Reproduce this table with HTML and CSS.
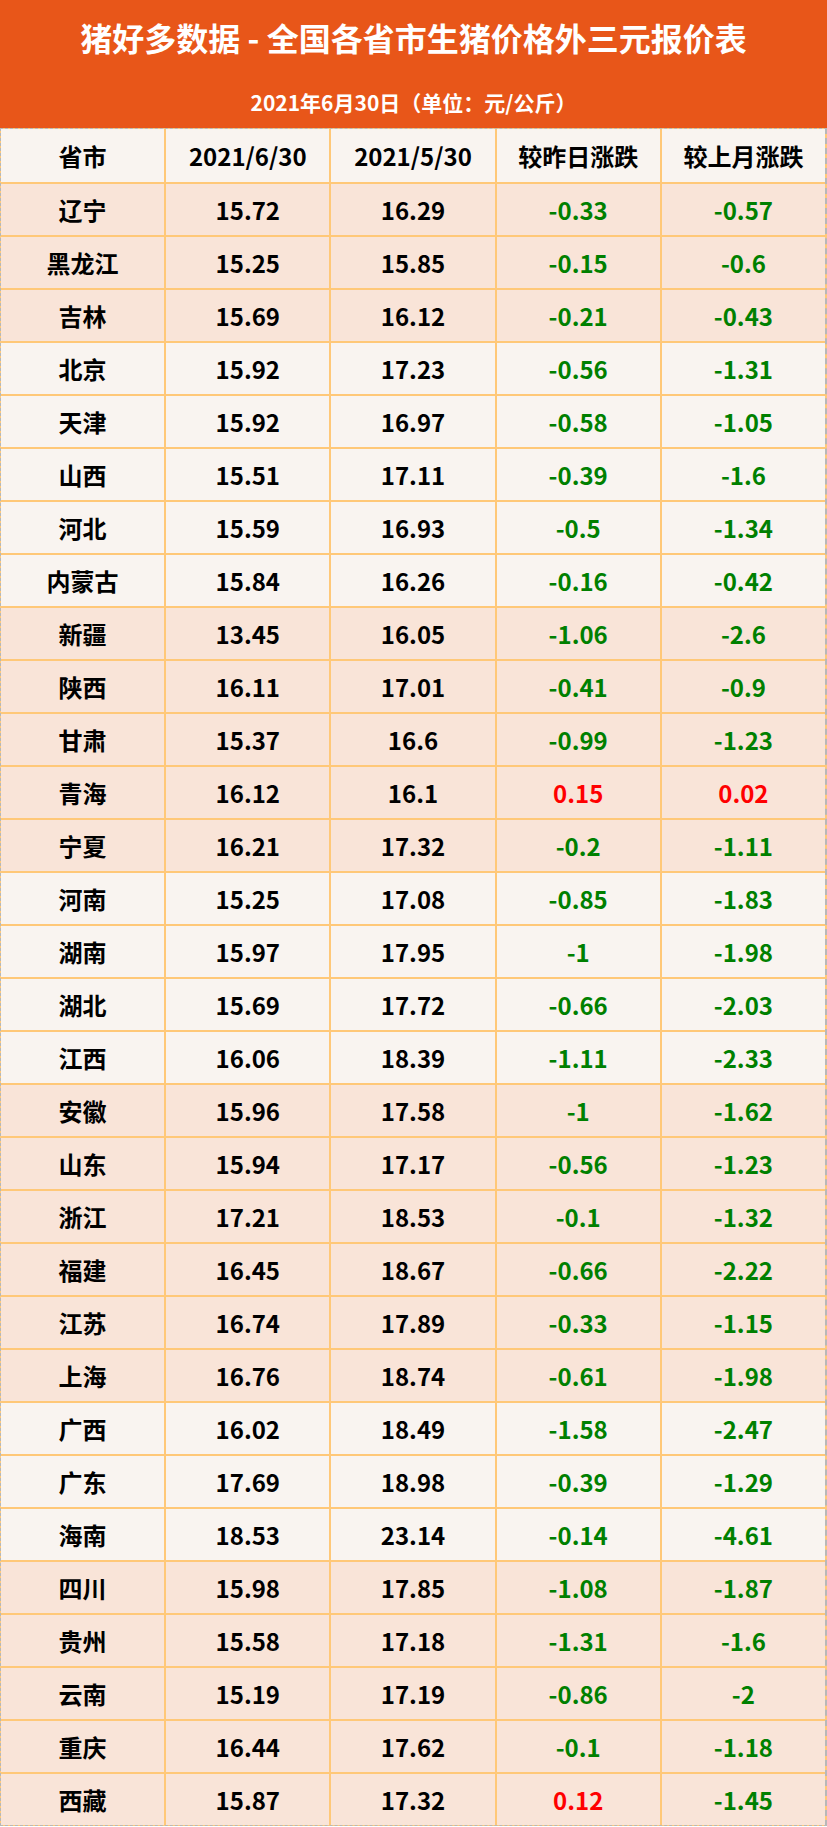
FILE: index.html
```html
<!DOCTYPE html>
<html lang="zh-CN">
<head>
<meta charset="utf-8">
<title>猪好多数据 - 全国各省市生猪价格外三元报价表</title>
<link rel="stylesheet" href="styles.css">
</head>
<body>
<div class="sheet">
  <header class="banner">
    <h1 class="title">猪好多数据 - 全国各省市生猪价格外三元报价表</h1>
    <p class="subtitle">2021年6月30日（单位：元/公斤）</p>
  </header>
  <div class="table">
    <div class="row head w"><div>省市</div><div>2021/6/30</div><div>2021/5/30</div><div>较昨日涨跌</div><div>较上月涨跌</div></div>
    <div class="row p"><div>辽宁</div><div>15.72</div><div>16.29</div><div class="dn">-0.33</div><div class="dn">-0.57</div></div>
    <div class="row p"><div>黑龙江</div><div>15.25</div><div>15.85</div><div class="dn">-0.15</div><div class="dn">-0.6</div></div>
    <div class="row p"><div>吉林</div><div>15.69</div><div>16.12</div><div class="dn">-0.21</div><div class="dn">-0.43</div></div>
    <div class="row w"><div>北京</div><div>15.92</div><div>17.23</div><div class="dn">-0.56</div><div class="dn">-1.31</div></div>
    <div class="row w"><div>天津</div><div>15.92</div><div>16.97</div><div class="dn">-0.58</div><div class="dn">-1.05</div></div>
    <div class="row w"><div>山西</div><div>15.51</div><div>17.11</div><div class="dn">-0.39</div><div class="dn">-1.6</div></div>
    <div class="row w"><div>河北</div><div>15.59</div><div>16.93</div><div class="dn">-0.5</div><div class="dn">-1.34</div></div>
    <div class="row w"><div>内蒙古</div><div>15.84</div><div>16.26</div><div class="dn">-0.16</div><div class="dn">-0.42</div></div>
    <div class="row p"><div>新疆</div><div>13.45</div><div>16.05</div><div class="dn">-1.06</div><div class="dn">-2.6</div></div>
    <div class="row p"><div>陕西</div><div>16.11</div><div>17.01</div><div class="dn">-0.41</div><div class="dn">-0.9</div></div>
    <div class="row p"><div>甘肃</div><div>15.37</div><div>16.6</div><div class="dn">-0.99</div><div class="dn">-1.23</div></div>
    <div class="row p"><div>青海</div><div>16.12</div><div>16.1</div><div class="up">0.15</div><div class="up">0.02</div></div>
    <div class="row p"><div>宁夏</div><div>16.21</div><div>17.32</div><div class="dn">-0.2</div><div class="dn">-1.11</div></div>
    <div class="row w"><div>河南</div><div>15.25</div><div>17.08</div><div class="dn">-0.85</div><div class="dn">-1.83</div></div>
    <div class="row w"><div>湖南</div><div>15.97</div><div>17.95</div><div class="dn">-1</div><div class="dn">-1.98</div></div>
    <div class="row w"><div>湖北</div><div>15.69</div><div>17.72</div><div class="dn">-0.66</div><div class="dn">-2.03</div></div>
    <div class="row w"><div>江西</div><div>16.06</div><div>18.39</div><div class="dn">-1.11</div><div class="dn">-2.33</div></div>
    <div class="row p"><div>安徽</div><div>15.96</div><div>17.58</div><div class="dn">-1</div><div class="dn">-1.62</div></div>
    <div class="row p"><div>山东</div><div>15.94</div><div>17.17</div><div class="dn">-0.56</div><div class="dn">-1.23</div></div>
    <div class="row p"><div>浙江</div><div>17.21</div><div>18.53</div><div class="dn">-0.1</div><div class="dn">-1.32</div></div>
    <div class="row p"><div>福建</div><div>16.45</div><div>18.67</div><div class="dn">-0.66</div><div class="dn">-2.22</div></div>
    <div class="row p"><div>江苏</div><div>16.74</div><div>17.89</div><div class="dn">-0.33</div><div class="dn">-1.15</div></div>
    <div class="row p"><div>上海</div><div>16.76</div><div>18.74</div><div class="dn">-0.61</div><div class="dn">-1.98</div></div>
    <div class="row w"><div>广西</div><div>16.02</div><div>18.49</div><div class="dn">-1.58</div><div class="dn">-2.47</div></div>
    <div class="row w"><div>广东</div><div>17.69</div><div>18.98</div><div class="dn">-0.39</div><div class="dn">-1.29</div></div>
    <div class="row w"><div>海南</div><div>18.53</div><div>23.14</div><div class="dn">-0.14</div><div class="dn">-4.61</div></div>
    <div class="row p"><div>四川</div><div>15.98</div><div>17.85</div><div class="dn">-1.08</div><div class="dn">-1.87</div></div>
    <div class="row p"><div>贵州</div><div>15.58</div><div>17.18</div><div class="dn">-1.31</div><div class="dn">-1.6</div></div>
    <div class="row p"><div>云南</div><div>15.19</div><div>17.19</div><div class="dn">-0.86</div><div class="dn">-2</div></div>
    <div class="row p"><div>重庆</div><div>16.44</div><div>17.62</div><div class="dn">-0.1</div><div class="dn">-1.18</div></div>
    <div class="row p"><div>西藏</div><div>15.87</div><div>17.32</div><div class="up">0.12</div><div class="dn">-1.45</div></div>
  </div>
</div>
</body>
</html>
```
FILE: styles.css
```css
* { box-sizing: border-box; }
html, body { margin: 0; padding: 0; }
body {
  width: 827px;
  font-family: "Noto Sans CJK SC", "Noto Sans", sans-serif;
  font-weight: 700;
  color: #000;
  background: #fff;
}
.sheet { width: 827px; }
.banner {
  height: 128px;
  background: #e85619;
  color: #fff;
  display: flex;
  flex-direction: column;
  align-items: center;
  padding-top: 15px;
}
.title {
  margin: 0;
  font-size: 32px;
  line-height: 44px;
  font-weight: 700;
  letter-spacing: 0;
}
.subtitle {
  margin: 29px 0 0 0;
  font-size: 21px;
  line-height: 28px;
  font-weight: 700;
}
.table {
  display: flex;
  flex-direction: column;
  gap: 2px;
  background: #ffc878;
  border-left: 1px dashed #b8b8b8;
  border-right: 2px dashed #b8b8b8;
  border-top: 1px dashed #b8b8b8;
  border-bottom: 1px dashed #b8b8b8;
}
.row {
  display: grid;
  grid-template-columns: repeat(5, 1fr);
  gap: 2px;
  height: 51px;
}
.row.head { height: 53px; }
.row > div {
  display: flex;
  align-items: center;
  justify-content: center;
  font-size: 24px;
  line-height: 1;
}
.row.p > div { background: #f9e4d8; }
.row.w > div { background: #f9f4f0; }
.dn { color: #008000; }
.up { color: #ff0000; }
```
